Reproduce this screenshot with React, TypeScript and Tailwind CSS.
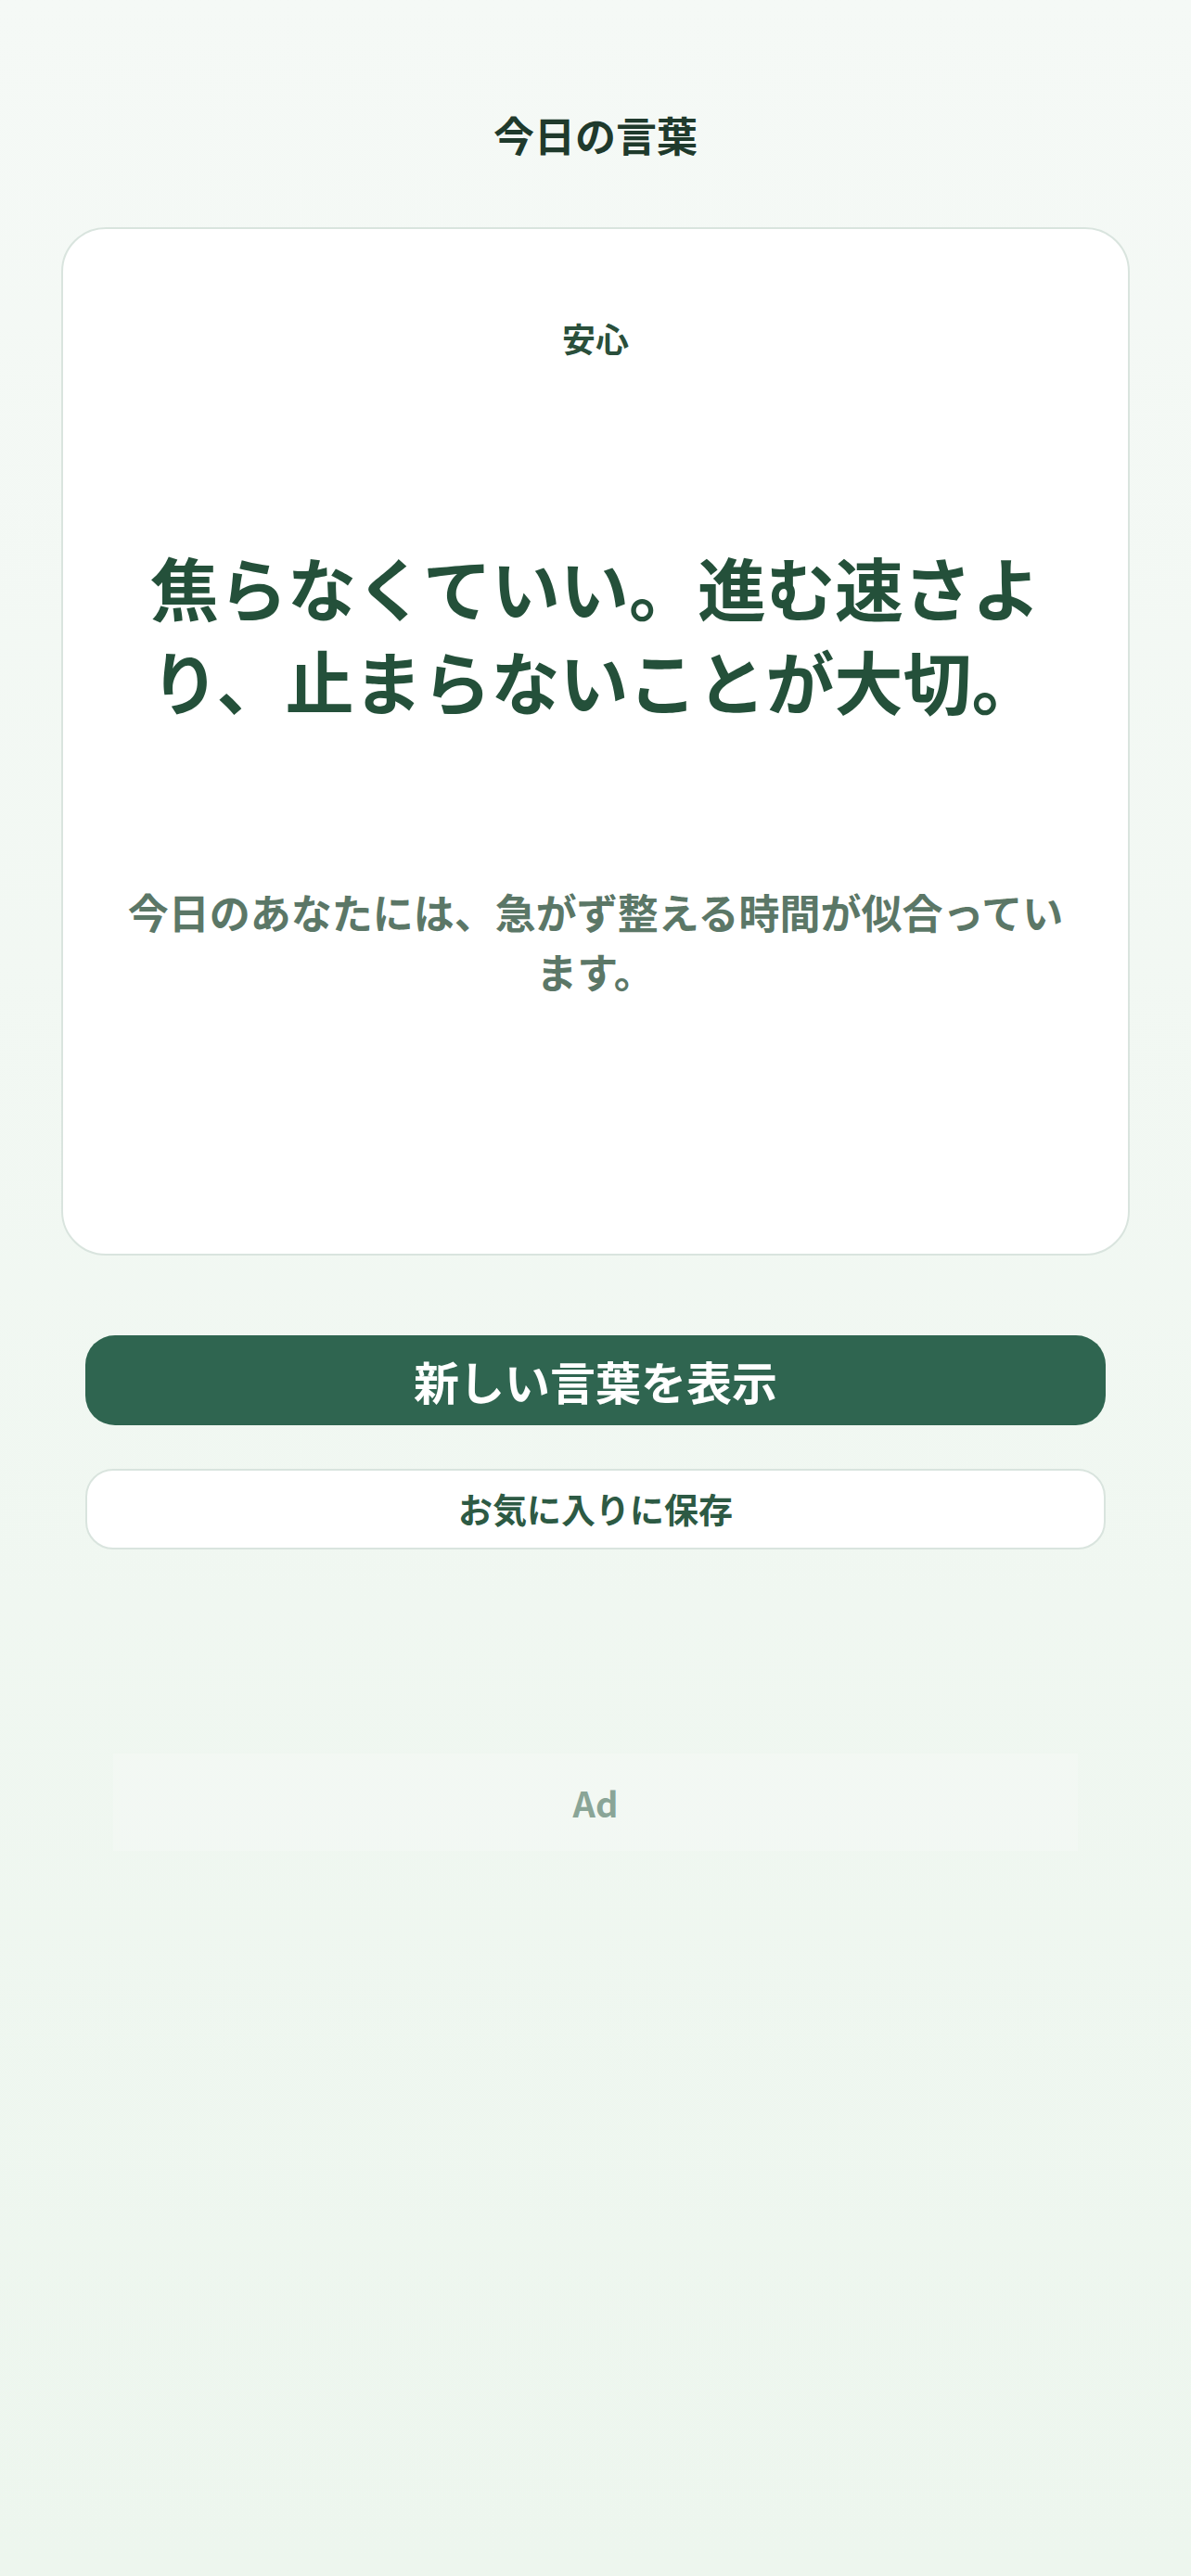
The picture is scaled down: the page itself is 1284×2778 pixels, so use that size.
import React from "react";

const font = { fontFamily: '"Noto Sans CJK JP", "Noto Sans", sans-serif' };

export default function App() {
  return (
    <div
      className="min-h-screen w-full bg-gradient-to-b from-[#f5f9f6] to-[#edf6ee] pb-[200px]"
      style={font}
    >
      <div className="flex flex-col items-center pt-[112px]">
        <h1 className="text-[44px] leading-[66px] font-bold text-[#1f3a2c]">今日の言葉</h1>
      </div>

      <div className="mx-[66px] mt-[67px] rounded-[48px] border-2 border-[#d9e4de] bg-white px-[64px] pt-[90px] pb-[273px] text-center">
        <div className="text-[36px] leading-[54px] font-bold text-[#2a4f3b]">安心</div>
        <p className="mt-[190px] text-[74px] leading-[101px] font-bold text-[#24503a]">
          焦らなくていい。進む速さより、止まらないことが大切。
        </p>
        <p className="mt-[168px] text-[44px] leading-[64px] font-bold text-[#5b7767]">
          今日のあなたには、急がず整える時間が似合っています。
        </p>
      </div>

      <div className="mx-[92px] mt-[86px] flex flex-col gap-[47px]">
        <button className="h-[97px] w-full rounded-[32px] bg-[#2f6550] text-[49px] font-bold text-white">
          新しい言葉を表示
        </button>
        <button className="h-[87px] w-full rounded-[30px] border-2 border-[#d9e4de] bg-white text-[37px] font-bold text-[#2d5a44]">
          お気に入りに保存
        </button>
      </div>

      <div className="mx-[122px] mt-[220px] flex h-[105px] items-center justify-center bg-white/20">
        <span className="text-[38px] font-bold text-[#8aa597]">Ad</span>
      </div>
    </div>
  );
}
